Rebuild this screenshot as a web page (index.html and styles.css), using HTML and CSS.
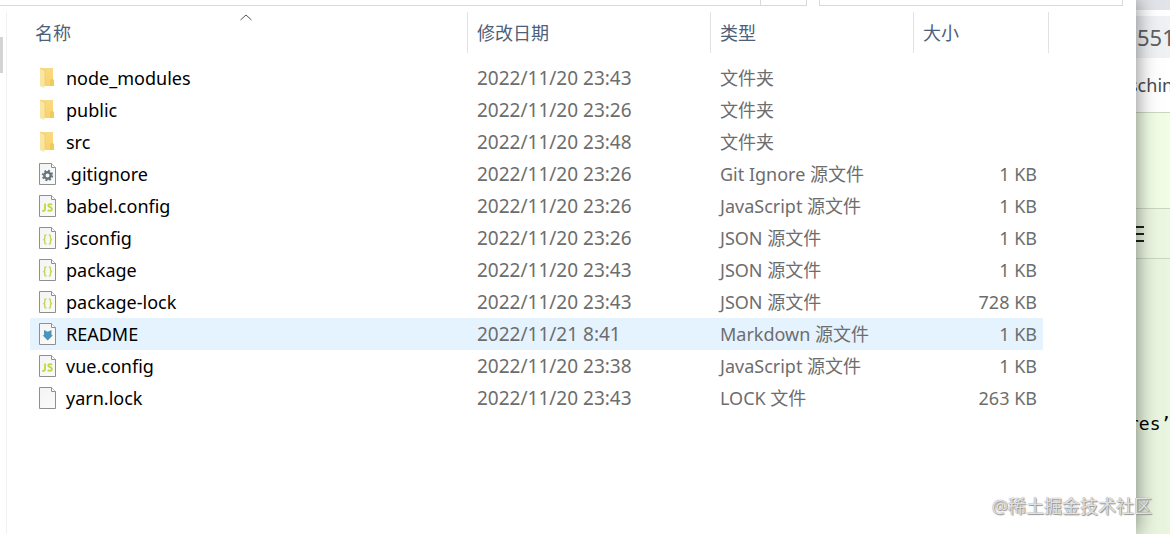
FILE: index.html
```
<!DOCTYPE html>
<html lang="zh-CN">
<head>
    <meta charset="UTF-8">
    <meta name="viewport" content="width=device-width, initial-scale=1.0">
    <title>文件资源管理器</title>
    <link rel="stylesheet" href="styles.css">
</head>
<body>
    <!-- shared icon shapes -->
    <svg class="defs" width="0" height="0" aria-hidden="true">
        <defs>
            <linearGradient id="paper" x1="0" y1="0" x2="1" y2="1">
                <stop offset="0" stop-color="#f4f4f4"/>
                <stop offset="1" stop-color="#fafafa"/>
            </linearGradient>
            <linearGradient id="gold" x1="0" y1="0" x2="0" y2="1">
                <stop offset="0" stop-color="#f6da84"/>
                <stop offset="1" stop-color="#f8d468"/>
            </linearGradient>
            <symbol id="folder" viewBox="0 0 18 22">
                <path d="M1 1H14V12L15 14V19H3L1 18Z" fill="url(#gold)"/>
                <path d="M11 14L12 12H14L15 14V19H11Z" fill="#f2c95c"/>
                <path d="M1 1L5 3Q6 4 6 6V18L5 21L1 19Z" fill="#fbe5a2"/>
                <path d="M1 1L5 3Q6 4 6 6V18" fill="none" stroke="#e9c667" stroke-width="0.6"/>
            </symbol>
            <symbol id="page" viewBox="0 0 18 22">
                <path d="M0.5 0.5H12.5L16.5 4.5V21.5H0.5Z" fill="url(#paper)" stroke="#8f8f8f"/>
                <path d="M12.5 0.5V4.5H16.5" fill="#fff" stroke="#8f8f8f"/>
            </symbol>
            <symbol id="gear" viewBox="0 0 18 22">
                <use href="#page"/>
                <circle cx="8.5" cy="12.5" r="3.2" fill="none" stroke="#68737a" stroke-width="2.4"/>
                <circle cx="8.5" cy="12.5" r="4.8" fill="none" stroke="#68737a" stroke-width="1.8" stroke-dasharray="1.9 1.87"/>
            </symbol>
            <symbol id="js" viewBox="0 0 18 22">
                <use href="#page"/>
                <path d="M6 8.5V14.2Q6 16.4 3.2 15.6M13.2 9.6Q9.2 8.4 9.2 10.6C9.2 12.4 13 12 13 14.1Q13 16.6 8.6 15.3" fill="none" stroke="#c3d63c" stroke-width="1.8"/>
            </symbol>
            <symbol id="json" viewBox="0 0 18 22">
                <use href="#page"/>
                <path d="M7.5 8H6.8Q5.8 8 5.8 9.2V11.2Q5.8 12.5 4.2 12.5Q5.8 12.5 5.8 13.8V15.8Q5.8 17 6.8 17H7.5M9.8 8H10.5Q11.5 8 11.5 9.2V11.2Q11.5 12.5 13.1 12.5Q11.5 12.5 11.5 13.8V15.8Q11.5 17 10.5 17H9.8" fill="none" stroke="#c3d65a" stroke-width="1.4"/>
            </symbol>
            <symbol id="md" viewBox="0 0 18 22">
                <use href="#page"/>
                <path d="M5 7L8.7 8.7L12.5 7V12.2H14L8.7 17.5L3.5 12.2H5Z" fill="#4c94b8"/>
            </symbol>
        </defs>
    </svg>

    <main class="explorer">
        <div class="toolbar">
            <div class="address"><div class="refresh"></div></div>
            <div class="search"></div>
        </div>
        <div class="pane">
            <div class="nav"><div class="thumb"></div></div>
            <div class="list">
                <table>
                    <thead>
                        <tr>
                            <th class="col-name">
                                <svg class="sort" width="12" height="7" viewBox="0 0 12 7"><path d="M0.5 6L6 1L11.5 6" fill="none" stroke="#555"/></svg>
                                <button type="button">名称</button>
                            </th>
                            <th class="col-date"><button type="button">修改日期</button></th>
                            <th class="col-type"><button type="button">类型</button></th>
                            <th class="col-size"><button type="button">大小</button></th>
                        </tr>
                    </thead>
                    <tbody>
                        <tr>
                            <td class="name"><div class="file"><svg><use href="#folder"/></svg>node_modules</div></td>
                            <td class="date">2022/11/20 23:43</td>
                            <td>文件夹</td>
                            <td class="size"></td>
                        </tr>
                        <tr>
                            <td class="name"><div class="file"><svg><use href="#folder"/></svg>public</div></td>
                            <td class="date">2022/11/20 23:26</td>
                            <td>文件夹</td>
                            <td class="size"></td>
                        </tr>
                        <tr>
                            <td class="name"><div class="file"><svg><use href="#folder"/></svg>src</div></td>
                            <td class="date">2022/11/20 23:48</td>
                            <td>文件夹</td>
                            <td class="size"></td>
                        </tr>
                        <tr>
                            <td class="name"><div class="file"><svg><use href="#gear"/></svg>.gitignore</div></td>
                            <td class="date">2022/11/20 23:26</td>
                            <td>Git Ignore 源文件</td>
                            <td class="size">1 KB</td>
                        </tr>
                        <tr>
                            <td class="name"><div class="file"><svg><use href="#js"/></svg>babel.config</div></td>
                            <td class="date">2022/11/20 23:26</td>
                            <td>JavaScript 源文件</td>
                            <td class="size">1 KB</td>
                        </tr>
                        <tr>
                            <td class="name"><div class="file"><svg><use href="#json"/></svg>jsconfig</div></td>
                            <td class="date">2022/11/20 23:26</td>
                            <td>JSON 源文件</td>
                            <td class="size">1 KB</td>
                        </tr>
                        <tr>
                            <td class="name"><div class="file"><svg><use href="#json"/></svg>package</div></td>
                            <td class="date">2022/11/20 23:43</td>
                            <td>JSON 源文件</td>
                            <td class="size">1 KB</td>
                        </tr>
                        <tr>
                            <td class="name"><div class="file"><svg><use href="#json"/></svg>package-lock</div></td>
                            <td class="date">2022/11/20 23:43</td>
                            <td>JSON 源文件</td>
                            <td class="size">728 KB</td>
                        </tr>
                        <tr class="active">
                            <td class="name"><div class="file"><svg><use href="#md"/></svg>README</div></td>
                            <td class="date">2022/11/21 8:41</td>
                            <td>Markdown 源文件</td>
                            <td class="size">1 KB</td>
                        </tr>
                        <tr>
                            <td class="name"><div class="file"><svg><use href="#js"/></svg>vue.config</div></td>
                            <td class="date">2022/11/20 23:38</td>
                            <td>JavaScript 源文件</td>
                            <td class="size">1 KB</td>
                        </tr>
                        <tr>
                            <td class="name"><div class="file"><svg><use href="#page"/></svg>yarn.lock</div></td>
                            <td class="date">2022/11/20 23:43</td>
                            <td>LOCK 文件</td>
                            <td class="size">263 KB</td>
                        </tr>
                    </tbody>
                </table>
            </div>
        </div>
    </main>

    <!-- browser window behind the explorer -->
    <aside class="behind">
        <div class="tabs"></div>
        <div class="url">551</div>
        <div class="bookmarks">schin</div>
        <div class="banner"></div>
        <div class="tools">
            <svg width="8" height="18" viewBox="0 0 8 18"><path d="M0 2H8M0 9H8M0 16H8" stroke="#1d211b" stroke-width="2"/></svg>
        </div>
        <div class="editor">res’</div>
    </aside>

    <div class="watermark">@稀土掘金技术社区</div>
</body>
</html>
```

FILE: styles.css
```
* {box-sizing: border-box;}
body {
    margin: 0; min-height: 100vh; display: flex; position: relative;
    overflow: hidden; background-color: white;
    font-family: "Noto Sans", "Noto Sans CJK SC", sans-serif;
    font-size: 18px; line-height: 24px;
}
.defs {position: absolute;}

/* explorer window */
.explorer {
    flex: 1; display: flex; flex-direction: column;
    position: relative; z-index: 1; background-color: white;
    box-shadow: 0 0 20px rgba(0, 0, 0, 0.5);
}
.toolbar {display: flex; gap: 12px; height: 6px; padding-right: 13px;}
.address, .search {border: 1px solid #d9d9d9; border-top: none;}
.address {flex: 1; border-left: none; display: flex; justify-content: flex-end;}
.refresh {width: 46px; border-left: 1px solid #d9d9d9;}
.search {width: 304px;}

.pane {flex: 1; display: flex; padding-top: 6px;}
.nav {width: 7px; border-right: 1px solid #f0f0f0; padding-top: 25px;}
.thumb {width: 3px; height: 36px; background-color: #d4d4d4;}
.list {flex: 1; padding: 0 87px 0 23px;}

table {width: 100%; table-layout: fixed; border-collapse: separate; border-spacing: 0;}
th {
    height: 41px; padding: 0 0 0 9px; position: relative;
    border-right: 1px solid #e2e2e2; text-align: left; font-weight: normal;
}
th button {
    padding: 0; border: none; background: none;
    font: inherit; color: #4c607a; cursor: pointer;
}
.col-name {padding-left: 5px;}
.col-date {width: 243px;}
.col-type {width: 203px;}
.col-size {width: 135px;}
.sort {position: absolute; top: 2px; left: 48%;}
tbody::before {content: ""; display: block; height: 9px;}

td {height: 32px; padding: 0 0 0 9px; color: #6d6d6d; white-space: nowrap;}
.name {color: black;}
.file {display: flex; align-items: center; gap: 9px;}
.file svg {width: 18px; height: 22px;}
.date {font-size: 19px;}
.size {
    text-align: right; padding-right: 6px;
    border-right: 6px solid transparent; background-clip: padding-box;
}
tbody tr:hover td, .active td {background-color: #e5f3ff;}

/* strip of the browser */
.behind {width: 34px; display: flex; flex-direction: column; background-color: white;}
.tabs {height: 10px; background-color: #e3e4e9; margin-bottom: 6px;}
.url {
    height: 42px; padding-left: 1px; background-color: #eff1f3;
    font-size: 22px; line-height: 42px; color: #5c6064;
}
.bookmarks {height: 54px; margin-left: -7px; line-height: 54px; color: #46494d;}
.banner {height: 96px; border-top: 1px solid #cbd6c1; background-color: #f1fde5;}
.tools {
    height: 51px; display: flex; align-items: center;
    border-top: 1px solid #cbd6c1; border-bottom: 1px solid #cbd6c1; background-color: #ecf7e2;
}
.editor {
    flex: 1; padding-top: 153px; text-indent: -8px; background-color: #e9f5df;
    font-family: "DejaVu Sans Mono", monospace; color: black;
}

.watermark {
    position: absolute; right: 18px; bottom: 16px; z-index: 2;
    color: rgba(255, 255, 255, 0.8); text-shadow: 0 0 1px #666, 1px 1px 1px #999;
}
```
